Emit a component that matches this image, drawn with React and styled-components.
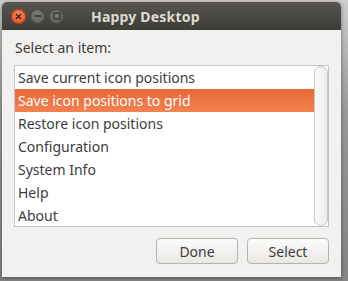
import React from 'react';
import styled, { createGlobalStyle } from 'styled-components';

const GlobalStyle = createGlobalStyle`
  html, body {
    margin: 0;
    padding: 0;
    background: #8e8e8e;
  }
  body {
    width: 348px;
    height: 281px;
    overflow: hidden;
    font-family: 'Noto Sans', 'DejaVu Sans', sans-serif;
  }
`;

const Page = styled.div`
  padding: 2px 7px 4px 2px;
  background: linear-gradient(to bottom, #cfcfcf 0%, #9a9a9a 40%, #858585 100%);
  height: 281px;
  box-sizing: border-box;
`;

const Dialog = styled.div`
  width: 339px;
  height: 275px;
  display: flex;
  flex-direction: column;
  background: #f2f1f0;
  border-radius: 5px 5px 0 0;
  box-shadow: 0 1px 4px rgba(0, 0, 0, 0.45);
  overflow: hidden;
`;

const TitleBar = styled.div`
  height: 28px;
  display: flex;
  align-items: center;
  padding-left: 9px;
  background: linear-gradient(to bottom, #58564f, #3d3c37);
  flex-shrink: 0;
`;

const WinButtons = styled.div`
  display: flex;
  gap: 4px;
  align-items: center;
`;

const CircleButton = styled.div`
  width: 15px;
  height: 15px;
  border-radius: 50%;
  display: flex;
  align-items: center;
  justify-content: center;
  background: ${p => (p.$close
    ? 'radial-gradient(circle at 50% 35%, #f6875a, #df4a17)'
    : 'radial-gradient(circle at 50% 35%, #7e7c76, #5a5852)')};
  box-shadow: inset 0 0 0 1px ${p => (p.$close ? '#b0391a' : '#45443f')};
`;

const Title = styled.div`
  margin-left: 27px;
  color: #dfdbd2;
  font-weight: 700;
  font-size: 14px;
  letter-spacing: 0.2px;
`;

const Body = styled.div`
  flex: 1;
  display: flex;
  flex-direction: column;
  padding: 9px 12px 13px 12px;
`;

const Label = styled.div`
  font-size: 14px;
  line-height: 18px;
  color: #3c3c3c;
  padding-left: 1px;
  margin-bottom: 8px;
`;

const ListBox = styled.div`
  height: 162px;
  display: flex;
  background: #ffffff;
  border: 1px solid #c8c5c0;
  box-sizing: border-box;
`;

const Items = styled.ul`
  flex: 1;
  margin: 0;
  padding: 0;
  list-style: none;
`;

const Item = styled.li`
  height: 23px;
  line-height: 23px;
  padding-left: 3px;
  font-size: 14px;
  color: ${p => (p.$selected ? '#ffffff' : '#3c3c3c')};
  background: ${p => (p.$selected ? 'linear-gradient(to bottom, #e8693a, #f38150)' : 'transparent')};
  white-space: nowrap;
`;

const Scrollbar = styled.div`
  width: 14px;
  box-sizing: border-box;
  border: 1px solid #c9c6c1;
  border-radius: 7px;
  background: linear-gradient(to right, #fbfbfa, #ecebe9);
`;

const ButtonRow = styled.div`
  display: flex;
  justify-content: flex-end;
  gap: 9px;
  margin-top: 11px;
`;

const Button = styled.button`
  width: 82px;
  height: 26px;
  font-family: inherit;
  font-size: 14px;
  color: #3c3c3c;
  border: 1px solid #b7b4ae;
  border-radius: 4px;
  background: linear-gradient(to bottom, #fcfcfb, #e9e7e4);
  padding: 0;
`;

const items = [
  'Save current icon positions',
  'Save icon positions to grid',
  'Restore icon positions',
  'Configuration',
  'System Info',
  'Help',
  'About',
];

const App = () => {
  return (
    <Page>
      <GlobalStyle />
      <Dialog>
        <TitleBar>
          <WinButtons>
            <CircleButton $close>
              <svg width="7" height="7" viewBox="0 0 7 7">
                <path d="M1 1L6 6M6 1L1 6" stroke="#3b1f14" strokeWidth="1.3" />
              </svg>
            </CircleButton>
            <CircleButton>
              <svg width="8" height="8" viewBox="0 0 8 8">
                <path d="M0.5 4H7.5" stroke="#2e2d29" strokeWidth="1.3" />
              </svg>
            </CircleButton>
            <CircleButton>
              <svg width="8" height="8" viewBox="0 0 8 8">
                <rect x="1" y="1" width="6" height="6" fill="none" stroke="#2e2d29" strokeWidth="1.2" />
              </svg>
            </CircleButton>
          </WinButtons>
          <Title>Happy Desktop</Title>
        </TitleBar>
        <Body>
          <Label>Select an item:</Label>
          <ListBox>
            <Items>
              {items.map((item, i) => (
                <Item key={item} $selected={i === 1}>{item}</Item>
              ))}
            </Items>
            <Scrollbar />
          </ListBox>
          <ButtonRow>
            <Button>Done</Button>
            <Button>Select</Button>
          </ButtonRow>
        </Body>
      </Dialog>
    </Page>
  );
};

export default App;
